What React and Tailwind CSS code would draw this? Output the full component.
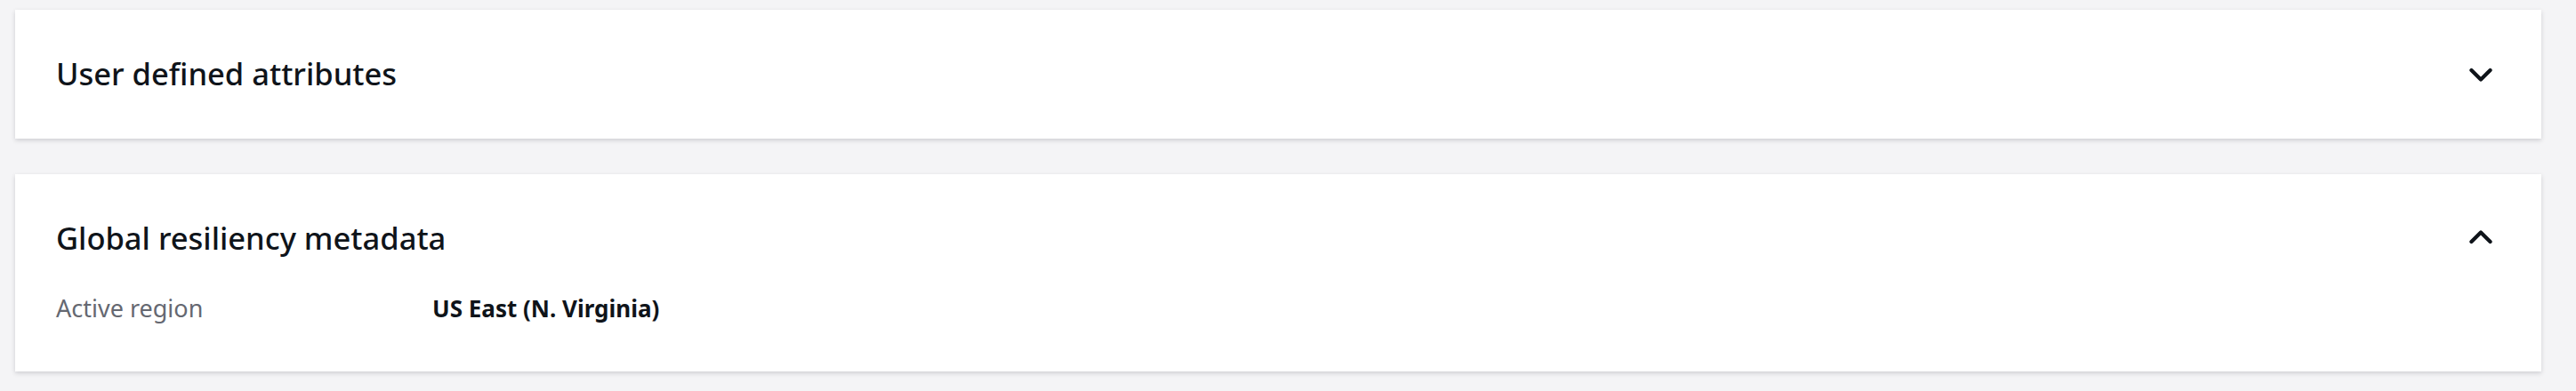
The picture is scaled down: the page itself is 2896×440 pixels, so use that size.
const Chevron = ({ up }) => (
  <svg className="w-[26px] h-[26px] text-[#0f141a]" viewBox="0 0 16 16" fill="none" stroke="currentColor">
    {up ? (
      <path d="m1.5 10.5 6.5-6.5 6.5 6.5" strokeWidth={2.6} strokeLinejoin="round" strokeLinecap="round" />
    ) : (
      <path d="m1.5 5.5 6.5 6.5 6.5-6.5" strokeWidth={2.6} strokeLinejoin="round" strokeLinecap="round" />
    )}
  </svg>
);

const SectionHeader = ({ title, expanded }) => (
  <div className="flex items-center justify-between h-[44px]">
    <h2 className="text-[34.5px] leading-[44px] font-medium text-[#0f141a]">{title}</h2>
    <div className="flex items-center justify-center w-[44px] h-[44px] mr-[-9px]">
      <Chevron up={expanded} />
    </div>
  </div>
);

export default function App() {
  return (
    <div
      className="w-[2896px] h-[440px] bg-[#f4f4f6] pl-[17px] pr-[39px] pt-[11px] flex flex-col gap-[40px]"
      style={{ fontFamily: '"Noto Sans", "Open Sans", Arial, sans-serif' }}
    >
      {/* User defined attributes */}
      <div className="bg-white shadow-[0_2px_5px_0_rgba(0,7,22,0.16)] pl-[46px] pr-[55px] pt-[50px] pb-[51px]">
        <SectionHeader title="User defined attributes" expanded={false} />
      </div>

      {/* Global resiliency metadata */}
      <div className="bg-white shadow-[0_2px_5px_0_rgba(0,7,22,0.16)] pl-[46px] pr-[55px] pt-[50px] pb-[53px]">
        <SectionHeader title="Global resiliency metadata" expanded={true} />
        <div className="flex items-center mt-[39px] h-[36px] leading-[36px]">
          <div className="w-[423px] text-[27px] text-[#656871]">Active region</div>
          <div className="text-[26px] font-bold text-[#0f141a]">US East (N. Virginia)</div>
        </div>
      </div>
    </div>
  );
}
